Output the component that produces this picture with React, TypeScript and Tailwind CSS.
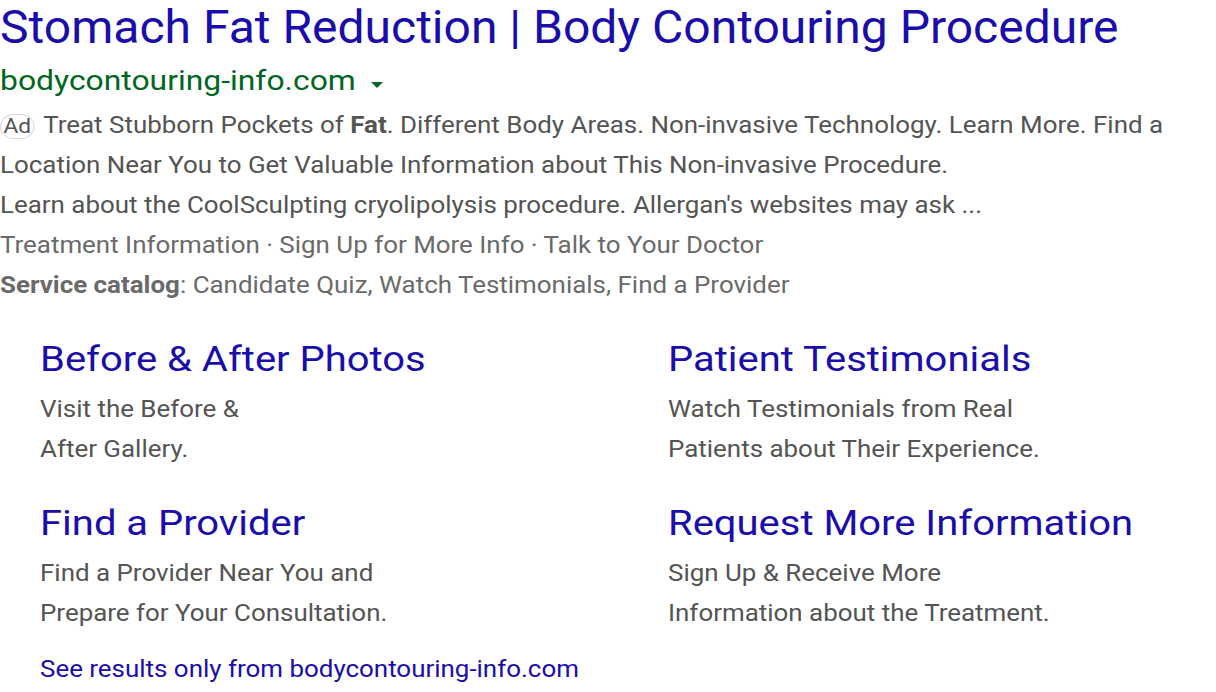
const sitelinks = [
  {
    title: "Before & After Photos",
    lines: ["Visit the Before &", "After Gallery."],
  },
  {
    title: "Patient Testimonials",
    lines: ["Watch Testimonials from Real", "Patients about Their Experience."],
  },
  {
    title: "Find a Provider",
    lines: ["Find a Provider Near You and", "Prepare for Your Consultation."],
  },
  {
    title: "Request More Information",
    lines: ["Sign Up & Receive More", "Information about the Treatment."],
  },
];

export default function App() {
  return (
    <div className="min-h-[692px] w-[1216px] overflow-hidden bg-white font-['Roboto',sans-serif] text-[#545454]">
      {/* headline */}
      <div className="h-[54px] origin-left scale-x-[1.044] whitespace-nowrap text-[46px] leading-[54px] text-[#1a0dab]">
        Stomach Fat Reduction | Body Contouring Procedure
      </div>

      {/* display url */}
      <div className="mt-[6px] flex h-[36px] items-start">
        <div className="w-[355px]">
          <div className="mt-[3px] h-[33px] origin-left scale-x-[1.18] whitespace-nowrap text-[27px] leading-[36px] text-[#006621]">
            bodycontouring-info.com
          </div>
        </div>
        <span className="ml-[16px] mt-[22px] h-0 w-0 border-x-[6.5px] border-t-[6px] border-x-transparent border-t-[#006621]" />
      </div>

      {/* description */}
      <div className="mt-[9px] origin-left scale-x-[1.08] whitespace-nowrap text-[24px] leading-[40px]">
        <div>
          <span className="mr-[8px] inline-flex h-[25px] w-[32px] items-center justify-center rounded-[13px] border border-[#d6d6d6] align-middle text-[21px] leading-none text-[#545454]">
            Ad
          </span>
          Treat Stubborn Pockets of <b className="font-bold">Fat</b>. Different Body Areas. Non-invasive
          Technology. Learn More. Find a
        </div>
        <div>Location Near You to Get Valuable Information about This Non-invasive Procedure.</div>
        <div>Learn about the CoolSculpting cryolipolysis procedure. Allergan's websites may ask ...</div>
        <div className="text-[#6a6a6a]">
          Treatment Information · Sign Up for More Info · Talk to Your Doctor
        </div>
        <div className="text-[#6a6a6a]">
          <b className="font-bold">Service catalog</b>: Candidate Quiz, Watch Testimonials, Find a
          Provider
        </div>
      </div>

      {/* sitelinks */}
      <div className="mt-[31px] grid grid-cols-[628px_1fr] gap-y-[31px] pl-[40px]">
        {sitelinks.map((s) => (
          <div key={s.title}>
            <div className="h-[48px] origin-left scale-x-[1.142] whitespace-nowrap text-[35px] leading-[48px] text-[#1a0dab]">
              {s.title}
            </div>
            <div className="mt-[5px] origin-left scale-x-[1.08] whitespace-nowrap text-[24px] leading-[40px]">
              {s.lines.map((l) => (
                <div key={l}>{l}</div>
              ))}
            </div>
          </div>
        ))}
      </div>

      <div className="mt-[16px] pl-[40px]">
        <div className="origin-left scale-x-[1.08] whitespace-nowrap text-[24px] leading-[40px] text-[#1a0dab]">
          See results only from bodycontouring-info.com
        </div>
      </div>
    </div>
  );
}
